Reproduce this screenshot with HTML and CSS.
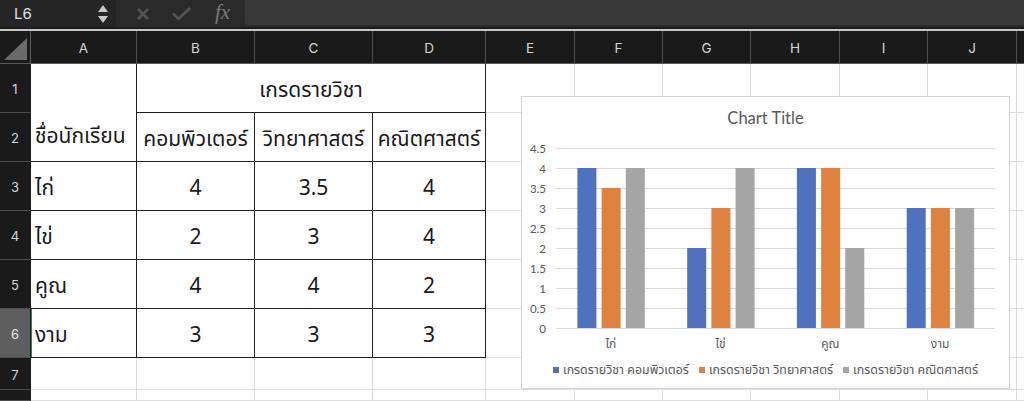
FILE: index.html
```html
<!DOCTYPE html>
<html lang="th">
<head>
<meta charset="utf-8">
<link rel="stylesheet" href="styles.css">
</head>
<body>
<div class="app">
  <div class="fbar">
    <div class="namebox">
      <span class="ref">L6</span>
      <span class="spin"><span class="up"></span><span class="down"></span></span>
    </div>
    <div class="ficons">
      <svg class="ico" width="16" height="16" viewBox="0 0 16 16"><path d="M3 3 L13 13 M13 3 L3 13" stroke="#545454" stroke-width="2.6" fill="none"/></svg>
      <svg class="ico" width="21" height="16" viewBox="0 0 21 16"><path d="M2 7.5 L7.5 13 L19 2" stroke="#545454" stroke-width="2.6" fill="none"/></svg>
      <span class="fx">fx</span>
    </div>
    <div class="finput"></div>
  </div>
  <div class="fsep"></div>
  <div class="sheet">
    <div class="corner"><span class="tri"></span></div>
    <div class="ch">A</div><div class="ch">B</div><div class="ch">C</div><div class="ch">D</div><div class="ch">E</div><div class="ch">F</div><div class="ch">G</div><div class="ch">H</div><div class="ch">I</div><div class="ch">J</div><div class="ch last"></div>

    <div class="rh">1</div>
    <div class="c t a-merge"><span>ชื่อนักเรียน</span></div>
    <div class="c t ctr span3">เกรดรายวิชา</div>
    <div class="c"></div><div class="c"></div><div class="c"></div><div class="c"></div><div class="c"></div><div class="c"></div><div class="c last"></div>

    <div class="rh">2</div>
    <div class="c t ctr">คอมพิวเตอร์</div><div class="c t ctr">วิทยาศาสตร์</div><div class="c t ctr">คณิตศาสตร์</div>
    <div class="c"></div><div class="c"></div><div class="c"></div><div class="c"></div><div class="c"></div><div class="c"></div><div class="c last"></div>

    <div class="rh">3</div>
    <div class="c t">ไก่</div><div class="c t ctr">4</div><div class="c t ctr">3.5</div><div class="c t ctr">4</div>
    <div class="c"></div><div class="c"></div><div class="c"></div><div class="c"></div><div class="c"></div><div class="c"></div><div class="c last"></div>

    <div class="rh">4</div>
    <div class="c t">ไข่</div><div class="c t ctr">2</div><div class="c t ctr">3</div><div class="c t ctr">4</div>
    <div class="c"></div><div class="c"></div><div class="c"></div><div class="c"></div><div class="c"></div><div class="c"></div><div class="c last"></div>

    <div class="rh">5</div>
    <div class="c t">คูณ</div><div class="c t ctr">4</div><div class="c t ctr">4</div><div class="c t ctr">2</div>
    <div class="c"></div><div class="c"></div><div class="c"></div><div class="c"></div><div class="c"></div><div class="c"></div><div class="c last"></div>

    <div class="rh sel">6</div>
    <div class="c t selcell">งาม</div><div class="c t ctr">3</div><div class="c t ctr">3</div><div class="c t ctr">3</div>
    <div class="c"></div><div class="c"></div><div class="c"></div><div class="c"></div><div class="c"></div><div class="c"></div><div class="c last"></div>

    <div class="rh">7</div>
    <div class="c"></div><div class="c"></div><div class="c"></div><div class="c"></div><div class="c"></div><div class="c"></div><div class="c"></div><div class="c"></div><div class="c"></div><div class="c"></div><div class="c last"></div>

    <div class="rh"></div>
    <div class="c"></div><div class="c"></div><div class="c"></div><div class="c"></div><div class="c"></div><div class="c"></div><div class="c"></div><div class="c"></div><div class="c"></div><div class="c"></div><div class="c last"></div>
  </div>

  <div class="chart">
    <div class="ctitle">Chart Title</div>
    <svg class="plot" width="487" height="220" viewBox="0 0 487 220">
      <g stroke="#d9d9d9" stroke-width="1">
        <line x1="34" x2="473" y1="11.5" y2="11.5"/>
        <line x1="34" x2="473" y1="31.5" y2="31.5"/>
        <line x1="34" x2="473" y1="51.5" y2="51.5"/>
        <line x1="34" x2="473" y1="71.5" y2="71.5"/>
        <line x1="34" x2="473" y1="91.5" y2="91.5"/>
        <line x1="34" x2="473" y1="111.5" y2="111.5"/>
        <line x1="34" x2="473" y1="131.5" y2="131.5"/>
        <line x1="34" x2="473" y1="151.5" y2="151.5"/>
        <line x1="34" x2="473" y1="171.5" y2="171.5"/>
        <line x1="34" x2="473" y1="191.5" y2="191.5"/>
      </g>
      <g class="ylab" text-anchor="end">
        <text x="24" y="15.5">4.5</text>
        <text x="24" y="35.5">4</text>
        <text x="24" y="55.5">3.5</text>
        <text x="24" y="75.5">3</text>
        <text x="24" y="95.5">2.5</text>
        <text x="24" y="115.5">2</text>
        <text x="24" y="135.5">1.5</text>
        <text x="24" y="155.5">1</text>
        <text x="24" y="175.5">0.5</text>
        <text x="24" y="195.5">0</text>
      </g>
      <g>
        <rect x="55.4" y="31" width="19" height="160" fill="#4f71be"/>
        <rect x="79.6" y="51" width="19" height="140" fill="#e0823f"/>
        <rect x="103.8" y="31" width="19" height="160" fill="#a5a5a5"/>

        <rect x="165.2" y="111" width="19" height="80" fill="#4f71be"/>
        <rect x="189.4" y="71" width="19" height="120" fill="#e0823f"/>
        <rect x="213.6" y="31" width="19" height="160" fill="#a5a5a5"/>

        <rect x="274.9" y="31" width="19" height="160" fill="#4f71be"/>
        <rect x="299.1" y="31" width="19" height="160" fill="#e0823f"/>
        <rect x="323.3" y="111" width="19" height="80" fill="#a5a5a5"/>

        <rect x="384.7" y="71" width="19" height="120" fill="#4f71be"/>
        <rect x="408.9" y="71" width="19" height="120" fill="#e0823f"/>
        <rect x="433.1" y="71" width="19" height="120" fill="#a5a5a5"/>
      </g>
      <g class="xlab" text-anchor="middle">
        <text x="88.9" y="211">ไก่</text>
        <text x="198.6" y="211">ไข่</text>
        <text x="308.4" y="211">คูณ</text>
        <text x="418.1" y="211">งาม</text>
      </g>
    </svg>
    <div class="legend">
      <span class="li"><span class="sw blue"></span>เกรดรายวิชา คอมพิวเตอร์</span>
      <span class="li"><span class="sw orange"></span>เกรดรายวิชา วิทยาศาสตร์</span>
      <span class="li"><span class="sw gray"></span>เกรดรายวิชา คณิตศาสตร์</span>
    </div>
  </div>
</div>
</body>
</html>
```

FILE: styles.css
```css
* { box-sizing: border-box; }
html, body { margin: 0; padding: 0; }
body {
  width: 1024px;
  height: 401px;
  overflow: hidden;
  background: #1a1a1a;
  font-family: "Noto Sans Thai", "Noto Sans", "DejaVu Sans", sans-serif;
}
.app {
  position: relative;
  width: 1024px;
  height: 401px;
  display: flex;
  flex-direction: column;
}

/* formula bar */
.fbar {
  height: 27px;
  display: flex;
  background: #2a2a2a;
  flex: none;
}
.namebox {
  width: 116px;
  background: #252525;
  display: flex;
  align-items: center;
  justify-content: space-between;
  padding: 0 8px 0 14px;
}
.ref {
  font-family: "Inter", "Liberation Sans", sans-serif;
  color: #e2e2e2;
  font-size: 15px;
}
.spin {
  display: flex;
  flex-direction: column;
  gap: 4px;
  align-items: center;
}
.up, .down {
  width: 0; height: 0;
  border-left: 5px solid transparent;
  border-right: 5px solid transparent;
}
.up { border-bottom: 7px solid #c9c9c9; }
.down { border-top: 7px solid #c9c9c9; }
.ficons {
  width: 129px;
  display: flex;
  align-items: center;
  padding-left: 19px;
  gap: 0;
}
.ico { display: block; }
.ico:first-child { margin-right: 20px; }
.ico:nth-child(2) { margin-right: 23px; }
.fx {
  font-family: "Liberation Serif", "DejaVu Serif", serif;
  font-style: italic;
  color: #7a7a7a;
  font-size: 21px;
  line-height: 1;
  margin-top: -2px;
}
.finput {
  flex: 1;
  height: 25px;
  background: #393939;
  border-bottom-left-radius: 3px;
}
.fsep {
  flex: none;
  height: 4px;
  border-top: 2px solid #1c1c1c;
  background: #c4c4c4;
}

/* sheet grid */
.sheet {
  flex: 1;
  display: grid;
  grid-template-columns: 31px 106px 118px 118px 113px 89px 88px 88px 89px 88px 89px 1fr;
  grid-template-rows: 33px 49px 49px 49px 49px 49px 49px 32px 1fr;
  background: #fff;
}
.corner, .ch, .rh {
  background: #1a1a1a;
  color: #d6d6d6;
  font-family: "Inter", "Liberation Sans", sans-serif;
  font-size: 13px;
  display: flex;
  align-items: center;
  justify-content: center;
}
.ch { font-size: 13.5px; }
.corner {
  position: relative;
  border-right: 1px solid #5a5a5a;
  border-bottom: 1px solid #5a5a5a;
}
.tri {
  position: absolute;
  right: 3px;
  bottom: 3px;
  width: 0; height: 0;
  border-left: 23px solid transparent;
  border-bottom: 22px solid #6a6a6a;
}
.ch {
  border-right: 1px solid #4e4e4e;
  border-bottom: 1px solid #5a5a5a;
  padding-top: 2px;
}
.ch.last { border-right: none; }
.rh {
  border-right: 1px solid #1a1a1a;
  border-bottom: 1px solid #4c4c4c;
  padding-top: 2px;
}
.rh.sel { background: #5e5e5e; color: #e8e8e8; }
.c {
  border-right: 1px solid #dedede;
  border-bottom: 1px solid #dedede;
  background: #fff;
  color: #1a1a1a;
  font-size: 21px;
  display: flex;
  align-items: center;
  padding: 5px 0 0 4px;
  white-space: nowrap;
  overflow: visible;
}
.c.last { border-right: none; }
.c.t {
  border-right-color: #1e1e1e;
  border-bottom-color: #1e1e1e;
}
.c.ctr {
  justify-content: center;
  padding-left: 0;
}
.span3 { grid-column: span 3; }
.a-merge {
  grid-row: span 2;
  align-items: flex-end;
  padding-bottom: 9px;
}
.selcell { box-shadow: inset 1px 0 0 #2f8a4a; }

/* chart */
.chart {
  position: absolute;
  left: 521px;
  top: 96px;
  width: 489px;
  height: 293px;
  background: #fff;
  border: 1px solid #d4d4d4;
  font-family: "Lato", "Noto Sans Thai", "Noto Sans", sans-serif;
}
.ctitle {
  height: 40px;
  padding-top: 11px;
  line-height: 20px;
  text-align: center;
  font-size: 16.5px;
  color: #595959;
}
.plot { display: block; }
.ylab text {
  font-size: 11.5px;
  fill: #595959;
}
.xlab text {
  font-size: 12px;
  fill: #595959;
}
.legend {
  display: flex;
  justify-content: center;
  gap: 10px;
  margin-top: 6px;
  font-size: 12.4px;
  line-height: 14px;
  color: #595959;
}
.li { display: flex; align-items: center; gap: 4px; }
.sw { width: 6px; height: 6px; display: inline-block; }
.sw.blue { background: #4f71be; }
.sw.orange { background: #e0823f; }
.sw.gray { background: #a5a5a5; }
```
